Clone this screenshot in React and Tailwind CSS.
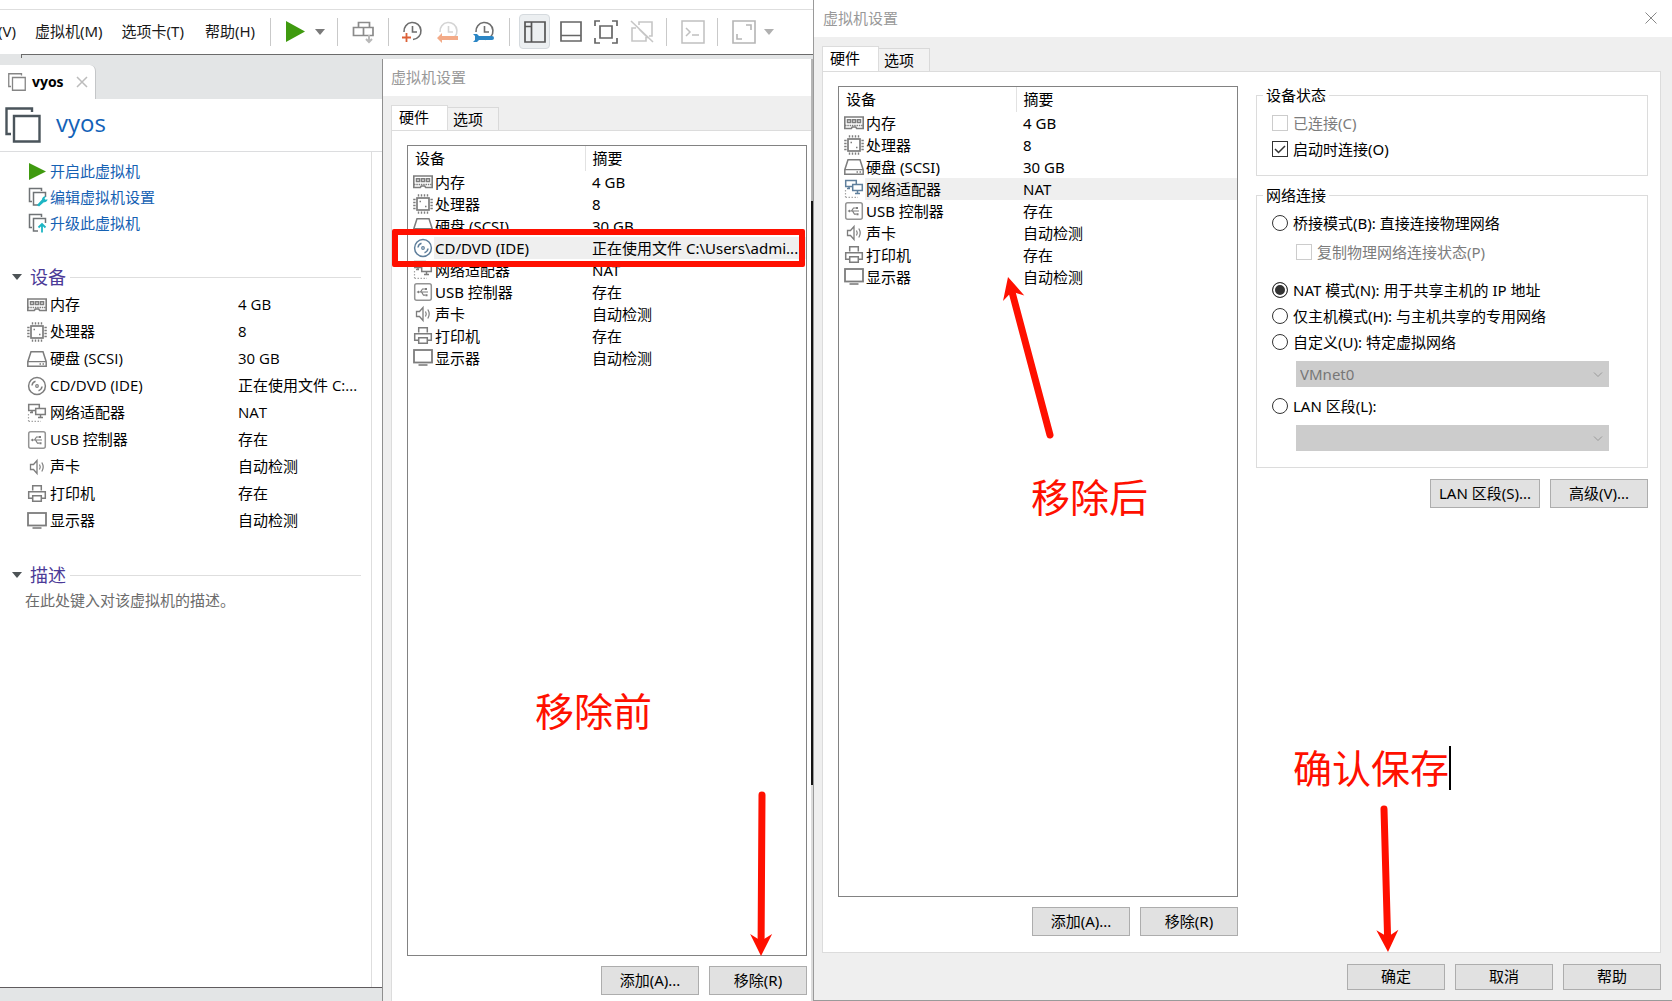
import React from "react";

const GRAY = "#7d7d7d";

function Svg({ children, size = 20, color = GRAY, className = "" }) {
  return (
    <svg width={size} height={size} viewBox={`0 0 ${size} ${size}`} fill="none" stroke={color} strokeWidth="1.5" className={`shrink-0 ${className}`} aria-hidden="true">
      {children}
    </svg>
  );
}

function MemoryIcon({ color = GRAY }) {
  return (
    <Svg color={color}>
      <path d="M.8 4h18.400v11.500h-6.500l-1-1.500H8.300l-1 1.500H.8z" strokeWidth="1.600" />
      <path d="M1 12.500h18" strokeWidth="1.600" strokeDasharray="1.500 .8" />
      <path d="M3.500 6.800h3v2.700h-3zM8.500 6.800h3v2.700h-3zM13.500 6.800h3v2.700h-3z" strokeWidth="1.500" />
    </Svg>
  );
}
function CpuIcon({ color = GRAY }) {
  return (
    <Svg color={color}>
      <rect x="4" y="4" width="12" height="12" strokeWidth="1.700" />
      <path d="M5.500.2v2.400M8.500.2v2.400M11.500.2v2.400M14.500.2v2.400M5.500 17.400v2.400M8.500 17.400v2.400M11.500 17.400v2.400M14.500 17.400v2.400M.2 5.500h2.400M.2 8.500h2.400M.2 11.500h2.400M.2 14.500h2.400M17.400 5.500h2.400M17.400 8.500h2.400M17.400 11.500h2.400M17.400 14.500h2.400" strokeWidth="1.400" />
      <path d="M6.500 7.500h1.500M12 12.500h1.500" strokeWidth="1.600" />
    </Svg>
  );
}
function DiskIcon({ color = GRAY }) {
  return (
    <Svg color={color}>
      <path d="M4 2.700h12l3.200 10v4.500H.8v-4.500z" />
      <path d="M1 12.700h18M12.500 15h1.500M15.500 15H17" strokeWidth="1.300" />
    </Svg>
  );
}
function DiscIcon({ color = GRAY }) {
  return (
    <Svg color={color}>
      <circle cx="10" cy="10" r="8.400" />
      <circle cx="10" cy="10" r="1.300" strokeWidth="1.200" />
      <path d="M5 9.500A5 5 0 0 1 8.500 5.300M15 10.500a5 5 0 0 1-3.500 4.200" />
    </Svg>
  );
}
function NetworkIcon({ color = GRAY }) {
  return (
    <Svg color={color}>
      <path d="M8 7.500H1.700v-6h10.600V5" />
      <path d="M8.700 5.500h9.600v6H8.700zM13.500 11.500V14M11 14.500h5M5 9v-1.500M3 9.500h3" />
      <path d="M1.500 11v7M1.500 18.300H14" strokeDasharray="1.500 1.500" strokeWidth="1.200" stroke="#a5a5a5" />
    </Svg>
  );
}
function UsbIcon({ color = GRAY }) {
  return (
    <Svg color={color}>
      <rect x="1.700" y="1.700" width="16.600" height="16.600" rx="2" stroke="#949494" />
      <path d="M5 10h10M7.500 10l2-3h2.500M8.500 10l2 3.200h2" strokeWidth="1.200" />
      <path d="M3.500 10l2.500-1.500v3zM12 6h2v2h-2zM12.500 12.200h2v2h-2z" fill={color} stroke="none" />
    </Svg>
  );
}
function SoundIcon({ color = GRAY }) {
  return (
    <Svg color={color}>
      <path d="M3.500 7.500h3l3.500-4v13l-3.500-4h-3z" strokeWidth="1.300" />
      <path d="M12.500 7.500q1.500 2.500 0 5M14.800 5.500q2.800 4.500 0 9" strokeWidth="1.200" />
    </Svg>
  );
}
function PrinterIcon({ color = GRAY }) {
  return (
    <Svg color={color}>
      <path d="M5.700 6.500v-4.800h8.600v4.800M5.500 14.300H1.700V7.700h16.600v6.600h-3.800" />
      <path d="M5.700 11.700h8.600v5.600H5.700z" />
    </Svg>
  );
}
function DisplayIcon({ color = GRAY }) {
  return (
    <Svg color={color}>
      <rect x="1" y="2" width="18" height="12.500" strokeWidth="1.800" />
      <path d="M5.500 17h9" strokeWidth="1.600" />
    </Svg>
  );
}

const DEVICES = [
  { icon: MemoryIcon, name: "内存", value: "4 GB" },
  { icon: CpuIcon, name: "处理器", value: "8" },
  { icon: DiskIcon, name: "硬盘 (SCSI)", value: "30 GB" },
  { icon: DiscIcon, name: "CD/DVD (IDE)", value: "正在使用文件 C:\\Users\\admi...", short: "正在使用文件 C:..." },
  { icon: NetworkIcon, name: "网络适配器", value: "NAT" },
  { icon: UsbIcon, name: "USB 控制器", value: "存在" },
  { icon: SoundIcon, name: "声卡", value: "自动检测" },
  { icon: PrinterIcon, name: "打印机", value: "存在" },
  { icon: DisplayIcon, name: "显示器", value: "自动检测" },
];

function Play({ width, height }) {
  return (
    <svg width={width} height={height} viewBox="0 0 18 20" preserveAspectRatio="none" className="shrink-0" aria-hidden="true">
      <path d="M0 0l18 10L0 20z" fill="#3f9a0f" />
    </svg>
  );
}

function Caret({ className = "" }) {
  return (
    <svg width="10" height="6" viewBox="0 0 10 6" className={`shrink-0 ${className}`} fill="currentColor" aria-hidden="true">
      <path d="M0 0h10L5 6z" />
    </svg>
  );
}

function Separator({ className = "" }) {
  return <div className={`h-7 w-px shrink-0 bg-[#c9c9c9] ${className}`} />;
}

function Clock({ color = "#6e6e6e" }) {
  return (
    <>
      <path d="M3 12A8.500 8.500 0 1 1 12 19.500" stroke={color} strokeWidth="1.600" />
      <path d="M11.500 6v6H16" stroke={color} strokeWidth="1.600" />
    </>
  );
}

function Toolbar() {
  return (
    <header className="flex h-[54px] items-start bg-white">
      <div className="mt-[9px] flex h-11 w-full items-center overflow-hidden border-t border-[#dedede] text-[15px] leading-6 whitespace-nowrap text-[#1a1a1a]">
        <div className="flex pb-0.5">
          <button className="-ml-0.5 w-5 text-left">(V)</button>
          <button className="ml-[17px]">虚拟机(M)</button>
          <button className="ml-[19px]">选项卡(T)</button>
          <button className="ml-[21px]">帮助(H)</button>
        </div>
        <Separator className="ml-[15px]" />
        <button className="ml-[15px] flex items-center gap-2.5 text-[#7a7a7a]" aria-label="开启">
          <Play width={19} height={21} />
          <Caret />
        </button>
        <Separator className="ml-3" />
        <button className="ml-3.5" aria-label="发送按键">
          <Svg size={24} color="#8b8b8b">
            <path d="M6.500 7.500v-5h11v5M1.500 7.500h10v8h-10zM11.500 7.500h9.500v8h-9.500z" strokeWidth="1.700" />
            <path d="M17 15v6M14 19l3 3 3-3" stroke="#b9b9b9" strokeWidth="2" />
          </Svg>
        </button>
        <Separator className="ml-3" />
        <button className="ml-3" aria-label="拍摄快照">
          <Svg size={24}>
            <Clock />
            <path d="M1 17.500h9M5.500 13v9" stroke="#dc6138" strokeWidth="1.800" />
          </Svg>
        </button>
        <button className="ml-3" aria-label="恢复快照">
          <Svg size={24}>
            <Clock color="#d4d4d4" />
            <path d="M5 16h16v4H5v3l-5-5 5-5z" fill="#f3ab88" stroke="none" />
          </Svg>
        </button>
        <button className="ml-3" aria-label="管理快照">
          <Svg size={24}>
            <Clock />
            <path d="M0 14h4l2 2h13a2 2 0 0 1 0 4H6l-2 2H0l2-2v-4z" fill="#2b86c5" stroke="none" />
          </Svg>
        </button>
        <Separator className="ml-3" />
        <button className="ml-[9px] flex h-[35px] w-[31px] items-center justify-center rounded-sm border border-[#d5dade] bg-[#eceff1]" aria-label="库">
          <Svg size={22} color="#555">
            <path d="M1 1h20v20H1zM7.500 1v20M1 5.500h6.500" strokeWidth="1.700" />
          </Svg>
        </button>
        <button className="ml-2.5" aria-label="缩略图栏">
          <Svg size={22} color="#666">
            <path d="M1 1h20v19H1zM1 14.500h20" strokeWidth="1.700" />
          </Svg>
        </button>
        <button className="ml-3" aria-label="全屏">
          <Svg size={24} color="#666">
            <path d="M6 6h12v12H6zM1 6V1h5M18 1h5v5M23 18v5h-5M6 23H1v-5" strokeWidth="1.700" />
          </Svg>
        </button>
        <button className="ml-3" aria-label="Unity">
          <Svg size={24} color="#c6c6c6">
            <path d="M9 5V2h13v14h-3M6 8H2v13h14v-4M9 9l9 9M1 1l22 21" strokeWidth="1.600" />
          </Svg>
        </button>
        <Separator className="ml-3" />
        <button className="ml-3.5" aria-label="控制台">
          <Svg size={24} color="#c0c0c0">
            <path d="M1 1h22v22H1zM5 8l4 4-4 4M11 15h7" strokeWidth="1.500" />
          </Svg>
        </button>
        <Separator className="ml-3" />
        <button className="ml-3.5 flex items-center gap-2 text-[#b0b0b0]" aria-label="拉伸">
          <Svg size={24} color="#b5b5b5">
            <path d="M1 1h22v22H1zM14 5h5v5M5 14v5h5" strokeWidth="1.600" />
          </Svg>
          <Caret />
        </button>
      </div>
    </header>
  );
}

function Squares({ size, color, width }) {
  return (
    <svg width={size} height={size} viewBox="0 0 36 36" fill="none" stroke={color} strokeWidth={width} className="shrink-0" aria-hidden="true">
      <path d="M27 5V1.500H1.500V27H6" />
      <path d="M9 9h25.500v25.500H9z" fill="#fff" />
    </svg>
  );
}

function TaskIcon({ children }) {
  return (
    <Svg>
      <path d="M4 14.500H1.500V1.500h12V4M10 18H5.500V5.500h12V10" stroke="#6f7376" />
      {children}
    </Svg>
  );
}

function Section({ title, children }) {
  return (
    <section>
      <h2 className="flex h-7 items-center pl-3 text-lg leading-7 text-[#4b3a97]">
        <Caret className="mr-2 text-[#4d5356]" />
        {title}
        <span className="mr-2.5 ml-1 h-px flex-1 bg-[#dedede]" />
      </h2>
      {children}
    </section>
  );
}

function MachinePanel() {
  return (
    <div className="flex min-w-0 flex-col bg-[#e3e5e6] font-['Open_Sans','Noto_Sans_CJK_SC',sans-serif]">
      <div className="ml-[21px] h-1 border-t border-l border-[#6b6b6b]" />
      <div className="flex h-[41px] items-end">
        <div className="flex h-[34px] w-24 items-center rounded-tr-md border-r border-[#c4c6c8] bg-white pl-2 text-sm">
          <Squares size={18} color="#858585" width="2.600" />
          <span className="ml-1.5 font-bold">vyos</span>
          <button className="ml-3" aria-label="关闭标签">
            <Svg size={12} color="#bcbcbc"><path d="M1 1l10 10M11 1L1 11" /></Svg>
          </button>
        </div>
      </div>
      <div className="flex flex-1 flex-col border-b border-[#5f5b5e] bg-white">
        <div className="flex h-[53px] items-center border-b border-[#dcdddf] pl-[5px]">
          <Squares size={36} color="#4a545b" width="2.400" />
          <h1 className="ml-[15px] pb-[5px] text-2xl leading-8 text-[#1362b8]">vyos</h1>
        </div>
        <div className="mr-2.5 flex-1 border-r border-[#dedede] pb-4">
          <nav className="flex flex-col pt-[6px] pl-7 text-[15px] leading-[26px] text-[#1561b3]">
            <a href="#start" className="flex items-center gap-0.5">
              <span className="flex w-5 pl-px"><Play width={17} height={17} /></span>开启此虚拟机
            </a>
            <a href="#edit" className="flex items-center gap-0.5">
              <TaskIcon>
                <path d="M9 18l5-5.500a3 3 0 0 1 4-3l-1.500 2 1 1.300 2-.6a3 3 0 0 1-3.700 3L11 19.500z" fill="#1db6c4" stroke="none" />
              </TaskIcon>
              编辑虚拟机设置
            </a>
            <a href="#upgrade" className="flex items-center gap-0.5">
              <TaskIcon>
                <path d="M14 19.500V12M10.500 14.500L14 11l3.500 3.500" stroke="#1db6c4" strokeWidth="1.800" />
              </TaskIcon>
              升级此虚拟机
            </a>
          </nav>
          <div className="mt-[27px]">
            <Section title="设备">
              <table className="w-full table-fixed text-[15px]">
                <tbody>
                  {DEVICES.map(({ icon: Icon, name, value, short }) => (
                    <tr key={name} className="h-[27px]">
                      <td className="w-[238px] p-0 pl-[27px] leading-[27px]">
                        <div className="flex items-center gap-[3px]"><Icon />{name}</div>
                      </td>
                      <td className="p-0 leading-[27px] whitespace-nowrap">{short || value}</td>
                    </tr>
                  ))}
                </tbody>
              </table>
            </Section>
          </div>
          <div className="mt-[27px]">
            <Section title="描述">
              <p className="pl-[25px] text-[15px] leading-[22px] text-[#6c6c6c]">在此处键入对该虚拟机的描述。</p>
            </Section>
          </div>
        </div>
      </div>
      <div className="h-[13px]" />
    </div>
  );
}

function Tabs() {
  return (
    <div className="flex items-end text-[15px] leading-5" role="tablist">
      <button role="tab" aria-selected="true" className="-mb-px h-[26px] w-[57px] border border-b-0 border-[#dcdcdc] bg-white pb-1 pl-[7px] text-left">硬件</button>
      <button role="tab" aria-selected="false" className="h-[23px] w-[51px] border border-b-0 border-l-0 border-[#d9d9d9] bg-[#f2f2f2] pl-[5px] text-left">选项</button>
    </div>
  );
}

function PushButton({ children, className = "h-[29px] w-[98px]" }) {
  return (
    <button className={`shrink-0 border border-[#adadad] bg-[#e1e1e1] pb-0.5 text-[15px] leading-5 whitespace-nowrap ${className}`}>{children}</button>
  );
}

function DeviceList({ devices, selected, boxed }) {
  return (
    <div className="flex-1 border border-[#828282] bg-white">
      <table className="w-full table-fixed text-[15px]">
        <thead>
          <tr className="h-[25px]">
            <th className="w-[177px] border-r border-[#e2e2e2] p-0 pl-[7px] text-left leading-[25px] font-normal">设备</th>
            <th className="p-0 pl-[7px] text-left leading-[25px] font-normal">摘要</th>
          </tr>
        </thead>
        <tbody>
          {devices.map(({ icon: Icon, name, value }) => {
            const on = name === selected;
            return (
              <tr key={name} className="relative h-[22px]">
                <td className="p-0 pl-[5px]">
                  <div className="flex h-[22px] items-center gap-px leading-[22px]">
                    <Icon color={on ? "#5f7f9c" : GRAY} />
                    <span className={on ? "flex-1 bg-[#efefef] pl-px" : "pl-px"}>{name}</span>
                  </div>
                </td>
                <td className={`p-0 pl-[7px] leading-[22px] whitespace-nowrap ${on ? "bg-[#efefef]" : ""}`}>
                  {value}
                  {on && boxed && <div className="pointer-events-none absolute -inset-y-2 right-px -left-4 z-10 rounded-xs border-[6px] border-[#ff1000]" />}
                </td>
              </tr>
            );
          })}
        </tbody>
      </table>
    </div>
  );
}

function ListButtons() {
  return (
    <div className="mt-2.5 flex justify-end gap-2.5">
      <PushButton>添加(A)...</PushButton>
      <PushButton>移除(R)</PushButton>
    </div>
  );
}

function RedArrow({ width, height, from, to, className }) {
  const dx = to[0] - from[0];
  const dy = to[1] - from[1];
  const angle = (Math.atan2(dy, dx) * 180) / Math.PI;
  const length = Math.hypot(dx, dy);
  return (
    <svg width={width} height={height} className={`pointer-events-none absolute ${className}`} aria-hidden="true">
      <g transform={`translate(${to[0]} ${to[1]}) rotate(${angle})`} fill="#ff1000">
        <path d="M0 0L-22 11L-17 3V-3L-22 -11z" />
        <path d={`M-16 0H${-length}`} stroke="#ff1000" strokeWidth="7" strokeLinecap="round" />
      </g>
    </svg>
  );
}

function BeforeDialog() {
  return (
    <section className="relative flex min-w-0 flex-col border-t border-[#6b6b6b]">
      <div className="h-1 bg-[#e3e5e6]" />
      <div className="flex flex-1 border-l border-[#8f8f8f] bg-[#efefef]">
        <div className="flex min-w-0 flex-1 flex-col">
          <div className="flex h-[37px] items-center bg-white pb-0.5 pl-2 text-[15px] leading-5 text-[#999]">虚拟机设置</div>
          <div className="mt-[9px] flex flex-1 flex-col pl-2">
            <Tabs />
            <div className="flex flex-1 flex-col border-t border-l border-[#dcdcdc] bg-white pt-[14px] pr-1 pb-[6px] pl-[15px]">
              <DeviceList devices={DEVICES} selected="CD/DVD (IDE)" boxed />
              <ListButtons />
            </div>
          </div>
        </div>
        <div className="flex w-[2px] flex-col">
          <div className="h-[142px] bg-[#b5b5b5]" />
          <div className="h-[584px] bg-[#151515]" />
          <div className="flex-1 bg-[#dcdcdc]" />
        </div>
      </div>
      <p className="pointer-events-none absolute top-[628px] left-[153px] text-[39px] leading-[56px] whitespace-nowrap text-[#ff1000]">移除前</p>
      <RedArrow width={40} height={180} from={[22, 9]} to={[21, 170]} className="right-[33px] bottom-[35px]" />
    </section>
  );
}

function Check({ label, disabled, checked, className = "" }) {
  return (
    <label className={`flex h-[26px] items-center gap-[5px] ${disabled ? "text-[#7c7c7c]" : ""} ${className}`}>
      <span className="relative flex">
        <input type="checkbox" defaultChecked={checked} disabled={disabled} className="peer size-4 appearance-none border border-[#333] bg-white disabled:border-[#ccc]" />
        <svg width="16" height="16" className="pointer-events-none absolute inset-0 hidden peer-checked:block" fill="none" stroke="#333" strokeWidth="1.500" aria-hidden="true">
          <path d="M3 8l3.500 3.500L13 5" />
        </svg>
      </span>
      {label}
    </label>
  );
}

function Radio({ label, checked, className = "" }) {
  return (
    <label className={`flex h-[26px] items-center gap-[5px] whitespace-nowrap ${className}`}>
      <input type="radio" name="network" defaultChecked={checked} className="size-4 shrink-0 appearance-none rounded-full border border-[#333] bg-white checked:bg-[#333] checked:shadow-[inset_0_0_0_2px_white]" />
      {label}
    </label>
  );
}

function Dropdown({ label, value }) {
  return (
    <div className="relative mr-[23px] ml-6 flex">
      <select aria-label={label} disabled className="h-[26px] w-full appearance-none bg-[#ccc] pl-1 text-[15px] leading-5 text-[#777] opacity-100">
        <option>{value}</option>
      </select>
      <svg width="10" height="6" className="pointer-events-none absolute top-[11px] right-[6px]" fill="none" stroke="#999" aria-hidden="true">
        <path d="M1 .5l4 4 4-4" />
      </svg>
    </div>
  );
}

function Group({ title, children, className }) {
  return (
    <fieldset className={`border border-[#dcdcdc] px-[15px] ${className}`}>
      <legend className="-ml-[9px] px-[3px] leading-[18px]">{title}</legend>
      {children}
    </fieldset>
  );
}

function AfterDialog() {
  return (
    <section className="relative z-20 flex min-w-0 flex-col border-b border-[#9a9a9a] bg-[#efefef]">
      <div className="flex h-[37px] items-center justify-between bg-white pr-[15px] pb-0.5 pl-[9px] text-[15px] leading-5 text-[#999]">
        虚拟机设置
        <button aria-label="关闭">
          <Svg size={12} color="#888"><path d="M.5.5l11 11M11.500.5l-11 11" strokeWidth="1" /></Svg>
        </button>
      </div>
      <div className="mt-[9px] flex flex-1 flex-col pr-[11px] pb-2.5 pl-2">
        <Tabs />
        <div className="flex flex-1 gap-[18px] border border-[#dcdcdc] bg-white pt-[14px] pr-3 pb-4 pl-[15px]">
          <div className="flex w-[400px] shrink-0 flex-col">
            <DeviceList devices={DEVICES.filter((d) => d.icon !== DiscIcon)} selected="网络适配器" />
            <ListButtons />
          </div>
          <div className="flex min-w-0 flex-1 flex-col text-[15px] leading-5">
            <Group title="设备状态" className="h-[90px]">
              <div className="pt-[6px]">
                <Check label="已连接(C)" disabled />
                <Check label="启动时连接(O)" checked />
              </div>
            </Group>
            <Group title="网络连接" className="mt-2.5 pb-4">
              <div className="pt-[6px]">
                <Radio label="桥接模式(B): 直接连接物理网络" />
                <Check label="复制物理网络连接状态(P)" disabled className="mt-[3px] ml-6" />
                <Radio label="NAT 模式(N): 用于共享主机的 IP 地址" checked className="mt-3" />
                <Radio label="仅主机模式(H): 与主机共享的专用网络" />
                <Radio label="自定义(U): 特定虚拟网络" className="mb-[6px]" />
                <Dropdown label="特定虚拟网络" value="VMnet0" />
                <Radio label="LAN 区段(L):" className="my-[6px]" />
                <Dropdown label="LAN 区段" value="" />
              </div>
            </Group>
            <div className="mt-[11px] flex justify-end gap-2.5">
              <PushButton className="h-[29px] w-[110px]">LAN 区段(S)...</PushButton>
              <PushButton>高级(V)...</PushButton>
            </div>
          </div>
        </div>
        <div className="mt-[11px] flex justify-end gap-2.5">
          <PushButton className="h-[26px] w-[98px]">确定</PushButton>
          <PushButton className="h-[26px] w-[98px]">取消</PushButton>
          <PushButton className="h-[26px] w-[98px]">帮助</PushButton>
        </div>
      </div>
      <p className="pointer-events-none absolute top-[469px] left-[217px] text-[39px] leading-[56px] whitespace-nowrap text-[#ff1000]">移除后</p>
      <RedArrow width={80} height={180} from={[56, 167]} to={[14, 9]} className="top-[268px] left-[180px]" />
      <div className="pointer-events-none absolute right-[221px] bottom-[204px] flex items-center">
        <p className="text-[39px] leading-[56px] whitespace-nowrap text-[#ff1000]">确认保存</p>
        <span className="h-11 w-0.5 bg-black" />
      </div>
      <RedArrow width={40} height={160} from={[16, 9]} to={[20, 152]} className="right-[264px] bottom-[40px]" />
    </section>
  );
}

export default function App() {
  return (
    <main className="grid min-h-screen grid-cols-[814fr_858fr] overflow-hidden bg-white font-['Noto_Sans','Noto_Sans_CJK_SC',sans-serif] text-black">
      <div className="flex min-w-0 flex-col border-r border-[#9a9a9a] bg-[#e3e5e6]">
        <Toolbar />
        <div className="grid flex-1 grid-cols-[382fr_431fr]">
          <MachinePanel />
          <BeforeDialog />
        </div>
      </div>
      <AfterDialog />
    </main>
  );
}
